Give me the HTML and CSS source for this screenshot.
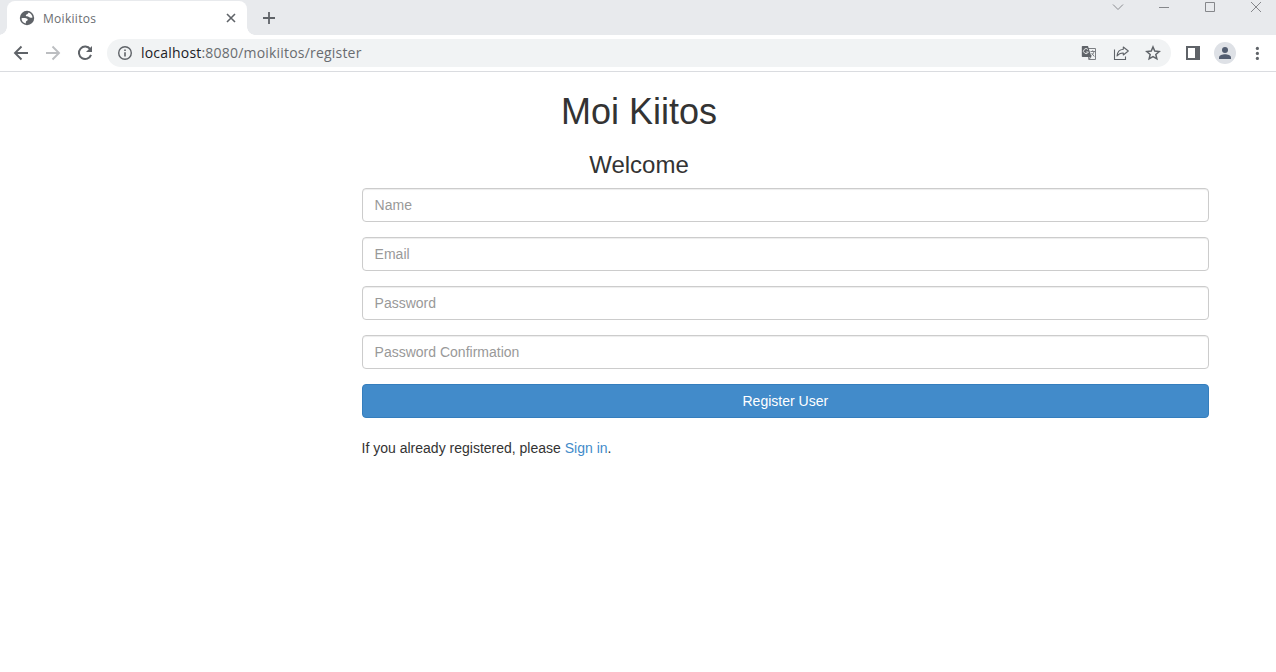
FILE: index.html
```html
<!DOCTYPE html>
<html lang="en">
<head>
<meta charset="utf-8">
<title>Moikiitos</title>
<link rel="stylesheet" href="styles.css">
</head>
<body>
<header class="browser">
  <div class="tabstrip">
    <div class="tab">
      <svg class="globe" width="16" height="16" viewBox="0 0 16 16"><circle cx="8" cy="8" r="7.200" fill="#5f6368"/><path d="M2.500 8.200c1.600-.3 3.500-.2 5.200.3 1.300.4 1.400 1.700.3 2.200-.9.300-1.200 1-1.200 2.700-2.600-.4-4.400-2.600-4.300-5.200zM9.500 2.500c-.3 1.300-1 1.700-2 2-.9.400-.9 1.500.1 1.800 1 .3 1.800.1 2.400.8.600.800 1.600.900 3.500.500-.1-2.300-1.700-4.500-4-5.100z" fill="#fff"/></svg>
      <span class="tab-title">Moikiitos</span>
      <svg width="10" height="10" viewBox="0 0 10 10"><path d="M1 1l8 8M9 1L1 9" stroke="#5f6368" stroke-width="1.600"/></svg>
    </div>
    <svg class="new-tab" width="12" height="12" viewBox="0 0 12 12"><path d="M6 0v12M0 6h12" stroke="#5f6368" stroke-width="1.800"/></svg>
    <div class="window-controls">
      <svg width="12" height="12" viewBox="0 0 12 12"><path d="M1 3.500l5 5 5-5" fill="none" stroke="#8a8c90"/></svg>
      <svg width="12" height="12" viewBox="0 0 12 12"><path d="M1 6.500h10" stroke="#85878b"/></svg>
      <svg width="12" height="12" viewBox="0 0 12 12"><path d="M1.500 1.500h9v9h-9z" fill="none" stroke="#85878b"/></svg>
      <svg width="12" height="12" viewBox="0 0 12 12"><path d="M1 1l10 10M11 1L1 11" stroke="#85878b"/></svg>
    </div>
  </div>
  <div class="toolbar">
    <nav class="nav">
      <svg width="16" height="16" viewBox="0 0 16 16"><path d="M15 8H2M8.500 1.500L2 8l6.500 6.500" fill="none" stroke="#5f6368" stroke-width="1.900"/></svg>
      <svg width="16" height="16" viewBox="0 0 16 16"><path d="M1 8h13M7.500 1.500L14 8l-6.500 6.500" fill="none" stroke="#bcbec1" stroke-width="1.900"/></svg>
      <svg width="16" height="16" viewBox="0 0 16 16"><path d="M13.200 4.200A6.200 6.200 0 1 0 14 9.800" fill="none" stroke="#5f6368" stroke-width="2"/><path d="M15 1v6H9z" fill="#5f6368"/></svg>
    </nav>
    <div class="address">
      <svg width="16" height="16" viewBox="0 0 16 16"><circle cx="8" cy="8" r="6.300" fill="none" stroke="#5f6368" stroke-width="1.400"/><path d="M8 7.200v4.300M8 4.400v1.600" stroke="#5f6368" stroke-width="1.600"/></svg>
      <span class="url"><span class="host">localhost</span>:8080/moikiitos/register</span>
      <svg width="16" height="16" viewBox="0 0 16 16"><path d="M6 3.500h8.500v11H8z" fill="#f1f3f4" stroke="#7c7f83"/><path d="M1.500 1H7l3.500 11h-9a1 1 0 0 1-.7-.5V1.800A1 1 0 0 1 1.500 1z" fill="#5f6368"/><path d="M7 4.500A2.500 2.500 0 1 0 7.400 7H5.200" fill="none" stroke="#e4e5e6"/><path d="M9.500 6.500H14M11.700 5.300v1.200M13 6.500c-.5 2-1.300 3-2.600 4M10.600 8l2.700 3.500M8 12v2.500l2-2.500" fill="none" stroke="#7c7f83"/></svg>
      <svg width="16" height="16" viewBox="0 0 16 16"><path d="M1.500 4.500v10h11v-3" fill="none" stroke="#5f6368" stroke-width="1.100"/><path d="M10.300 2l5 4-5 4V8C7.700 7.900 5.800 8.800 4 11c.3-3.800 2.400-6.500 6.300-6.800z" fill="none" stroke="#5f6368" stroke-width="1.100" stroke-linejoin="round"/></svg>
      <svg width="16" height="16" viewBox="0 0 16 16"><path d="M8 2l1.750 4.100 4.450.4-3.370 2.930 1 4.350L8 11.500l-3.830 2.280 1-4.350L1.800 6.500l4.450-.4z" fill="none" stroke="#5f6368" stroke-width="1.500"/></svg>
    </div>
    <svg class="panel" width="14" height="14" viewBox="0 0 14 14"><path d="M0 0h14v14H0zM2 2v10h7V2z" fill="#5f6368" fill-rule="evenodd"/></svg>
    <svg class="avatar" width="22" height="22" viewBox="0 0 22 22"><circle cx="11" cy="11" r="11" fill="#dee1e6"/><circle cx="11" cy="8" r="3" fill="#525d70"/><path d="M5 17v-1.500c0-2.200 3.500-3.300 6-3.300s6 1.100 6 3.300V17z" fill="#525d70"/></svg>
    <svg width="4" height="14" viewBox="0 0 4 14"><g fill="#5f6368"><circle cx="2.400" cy="2.400" r="1.600"/><circle cx="2.400" cy="7.400" r="1.600"/><circle cx="2.400" cy="12.400" r="1.600"/></g></svg>
  </div>
</header>
<main class="page">
  <h1 class="title">Moi Kiitos</h1>
  <h3 class="subtitle">Welcome</h3>
  <form class="register">
    <input class="field" type="text" placeholder="Name">
    <input class="field" type="text" placeholder="Email">
    <input class="field" type="password" placeholder="Password">
    <input class="field" type="password" placeholder="Password Confirmation">
    <button class="submit" type="button">Register User</button>
    <p class="hint">If you already registered, please <a class="link" href="#">Sign in</a>.</p>
  </form>
</main>
</body>
</html>
```
FILE: styles.css
```css
* { box-sizing: border-box; }
body {
  margin: 0;
  background: #fff;
  color: #333;
  font: 14px/20px "Liberation Sans", Arial, sans-serif;
}
svg { display: block; flex: none; }

.browser { font-family: "Open Sans", "Noto Sans", sans-serif; }
.tabstrip {
  display: flex;
  height: 35px;
  padding: 1px 14px 0 7px;
  background: #e8eaed;
}
.tab {
  position: relative;
  display: flex;
  align-items: center;
  width: 240px;
  height: 34px;
  padding: 0 11px 0 12px;
  border-radius: 8px 8px 0 0;
  background: #fff;
}
.tab::before,
.tab::after {
  content: "";
  position: absolute;
  bottom: 0;
  width: 8px;
  height: 8px;
}
.tab::before { left: -8px; background: radial-gradient(circle at 0 0, transparent 7.5px, #fff 8px); }
.tab::after { right: -8px; background: radial-gradient(circle at 100% 0, transparent 7.5px, #fff 8px); }
.tab-title {
  flex: 1;
  margin: 1px 0 0 8px;
  color: #6a6d71;
  font-size: 12px;
  letter-spacing: .3px;
}
.new-tab { margin: 11px 0 0 16px; }
.window-controls {
  display: flex;
  gap: 34px;
  margin-left: auto;
}
.toolbar {
  display: flex;
  align-items: center;
  height: 37px;
  padding: 0 17px 0 13px;
  border-bottom: 1px solid #dadce0;
}
.nav { display: flex; gap: 16px; }
.address {
  display: flex;
  align-items: center;
  gap: 16px;
  width: 1064px;
  height: 28px;
  margin-left: 14px;
  padding: 0 10px;
  border-radius: 14px;
  background: #f1f3f4;
}
.url {
  flex: 1;
  margin-left: -8px;
  color: #696c70;
  font-size: 14px;
  letter-spacing: .2px;
}
.host { color: #202124; }
.panel { margin-left: 15px; }
.avatar { margin: 0 19px 0 14px; }

.page { padding: 20px 67px 0 69px; }
.title,
.subtitle {
  margin: 0;
  font-weight: 500;
  line-height: 1.1;
  text-align: center;
}
.title { font-size: 36px; }
.subtitle { margin-top: 20px; font-size: 24px; }
.register {
  display: flex;
  flex-direction: column;
  gap: 15px;
  margin: 10px 0 0 292.6px;
}
.field {
  width: 100%;
  height: 34px;
  padding: 6px 12px;
  border: 1px solid #ccc;
  border-radius: 4px;
  background: #fff;
  box-shadow: inset 0 1px 1px rgba(0, 0, 0, .075);
  font: inherit;
}
.field::placeholder { color: #999; opacity: 1; }
.submit {
  height: 34px;
  padding: 6px 12px;
  border: 1px solid #357ebd;
  border-radius: 4px;
  background: #428bca;
  color: #fff;
  font: inherit;
}
.hint { margin: 5px 0 0; }
.link { color: #428bca; text-decoration: none; }
```
